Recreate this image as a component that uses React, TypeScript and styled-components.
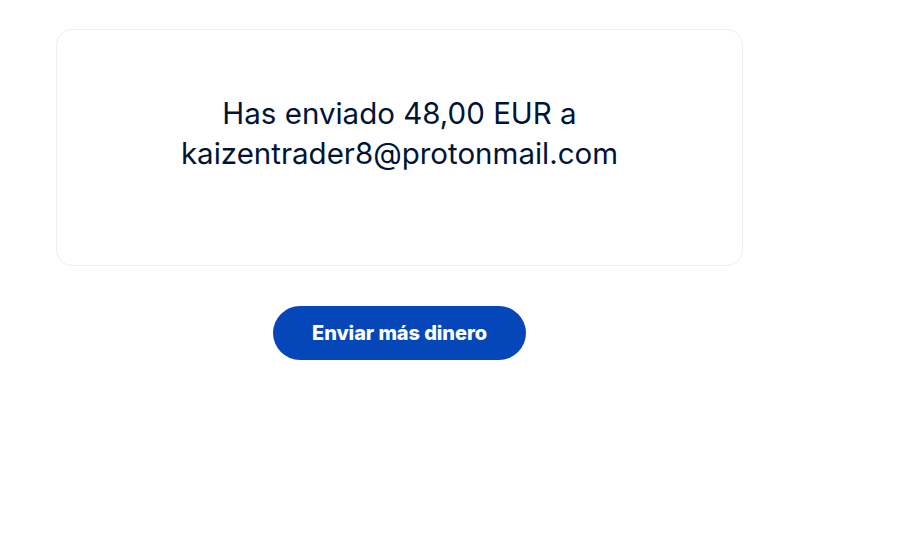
import React from "react";
import styled, { createGlobalStyle } from "styled-components";

const Global = createGlobalStyle`
  html, body { margin: 0; padding: 0; background: #ffffff; }
  body { font-family: Inter, "Noto Sans", Arial, sans-serif; }
`;

const Page = styled.div`
  width: 909px;
  height: 550px;
  box-sizing: border-box;
  padding: 29px 0 0 56px;
  display: flex;
  flex-direction: column;
  align-items: flex-start;
`;

const Column = styled.div`
  width: 687px;
  display: flex;
  flex-direction: column;
  align-items: center;
`;

const Card = styled.div`
  width: 100%;
  height: 237px;
  box-sizing: border-box;
  border: 1px solid #efefef;
  border-radius: 16px;
  display: flex;
  align-items: flex-start;
  justify-content: center;
  padding-top: 63px;
`;

const Message = styled.p`
  margin: 0;
  text-align: center;
  font-family: Inter, "Noto Sans", Arial, sans-serif;
  font-size: 29.5px;
  line-height: 40px;
  font-weight: 400;
  color: #001435;
`;

const PrimaryButton = styled.button`
  margin-top: 40px;
  width: 253px;
  height: 54px;
  border: none;
  border-radius: 27px;
  background: #0546b8;
  color: #ffffff;
  font-family: Inter, "Noto Sans", Arial, sans-serif;
  font-size: 20px;
  font-weight: 800;
  letter-spacing: -0.1px;
  cursor: pointer;
`;

export default function App() {
  return (
    <>
      <Global />
      <Page>
        <Column>
          <Card>
            <Message>
              Has enviado 48,00 EUR a
              <br />
              kaizentrader8@protonmail.com
            </Message>
          </Card>
          <PrimaryButton>Enviar más dinero</PrimaryButton>
        </Column>
      </Page>
    </>
  );
}
